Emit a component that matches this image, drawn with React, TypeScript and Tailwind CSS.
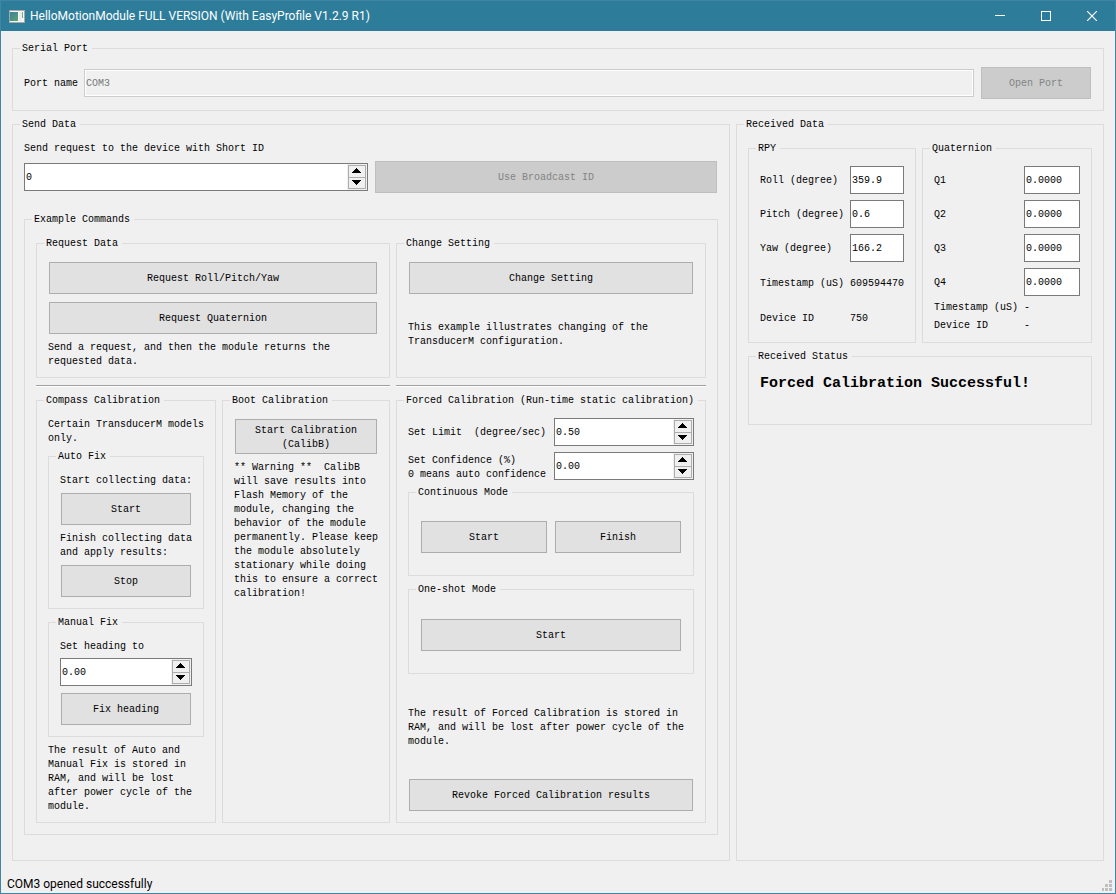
import type { ButtonHTMLAttributes, ReactNode } from "react";
import { useState } from "react";

function Group({ title, className = "", children }: { title: string; className?: string; children: ReactNode }) {
  return (
    <fieldset className={`flex min-w-0 flex-col border border-[#dcdcdc] px-[11px] pt-[11px] ${className}`}>
      <legend className="-ml-1 pr-1 pl-0.5 leading-[13px] whitespace-pre">{title}</legend>
      {children}
    </fieldset>
  );
}

function PushButton({ className = "", ...props }: ButtonHTMLAttributes<HTMLButtonElement>) {
  return (
    <button
      type="button"
      className={`m-px min-h-8 border border-[#adadad] bg-[#e1e1e1] pt-0.5 text-center leading-[14px] whitespace-pre hover:border-[#0078d7] hover:bg-[#e5f1fb] disabled:border-[#bfbfbf] disabled:bg-[#cccccc] disabled:text-[#838383] ${className}`}
      {...props}
    />
  );
}

function Arrow({ down = false }: { down?: boolean }) {
  return (
    <svg width="9" height="5" viewBox="0 0 9 5" shapeRendering="crispEdges" aria-hidden="true">
      <path
        d={down ? "M0 0h9v1H8v1H7v1H6v1H5v1H4V4H3V3H2V2H1V1H0z" : "M4 0h1v1h1v1h1v1h1v1h1v1H0V4h1V3h1V2h1V1h1z"}
        fill="#000"
      />
    </svg>
  );
}

function SpinBox({ id, initial, digits, step }: { id: string; initial: number; digits: number; step: number }) {
  const [text, setText] = useState(initial.toFixed(digits));
  const change = (delta: number) => setText(((parseFloat(text) || 0) + delta).toFixed(digits));
  return (
    <div className="flex h-7 min-w-0 border border-[#7a7a7a] bg-white">
      <input
        id={id}
        inputMode="decimal"
        value={text}
        onChange={(e) => setText(e.target.value)}
        className="min-w-0 flex-1 bg-transparent pt-0.5 pl-px outline-none"
      />
      <div className="w-5 bg-[#f0f0f0] p-px">
        <div className="grid h-full grid-rows-[12px_10px] divide-y divide-[#adadad] border border-[#adadad]">
          <button type="button" aria-label="Increase" className="flex items-center justify-center pr-px pb-0.5" onClick={() => change(step)}>
            <Arrow />
          </button>
          <button type="button" aria-label="Decrease" className="flex items-center justify-center pr-px pb-px" onClick={() => change(-step)}>
            <Arrow down />
          </button>
        </div>
      </div>
    </div>
  );
}

function Reading({ id, label, value }: { id: string; label: string; value: string }) {
  return (
    <>
      <label htmlFor={id} className="pt-0.5 whitespace-pre">{label}</label>
      <input id={id} readOnly value={value} className="h-7 w-full min-w-0 border border-[#7a7a7a] bg-white pl-px outline-none" />
    </>
  );
}

function Divider({ className = "" }: { className?: string }) {
  return <div className={`h-0.5 border-t border-b border-t-[#a0a0a0] border-b-white ${className}`} />;
}

function TitleBar() {
  return (
    <header className="flex h-[30px] items-center bg-[#2d7d9a] text-white">
      <svg className="ml-2 shrink-0" width="16" height="13" viewBox="0 0 16 13" aria-hidden="true">
        <defs>
          <linearGradient id="pane" x1="0" y1="0" x2="1" y2="1">
            <stop offset="0" stopColor="#3d7f9c" />
            <stop offset="1" stopColor="#5aa56e" />
          </linearGradient>
        </defs>
        <rect width="16" height="13" fill="#a8a8a8" />
        <rect x="1" y="1" width="14" height="11" fill="#f7f7f7" />
        <rect x="1" y="2" width="8" height="9" fill="url(#pane)" />
        <rect x="10" y="2" width="3" height="9" fill="#ececec" />
        <rect x="13" y="2" width="1" height="6" fill="#6fae86" />
      </svg>
      <h1 className="ml-[5px] flex-1 font-['Roboto','Noto_Sans',sans-serif] text-xs whitespace-nowrap">
        HelloMotionModule FULL VERSION (With EasyProfile V1.2.9 R1)
      </h1>
      <button type="button" aria-label="Minimize" className="flex h-full w-[46px] items-center justify-center">
        <svg width="10" height="10" viewBox="0 0 10 10" shapeRendering="crispEdges"><path d="M0 4.500h10" stroke="#fff" /></svg>
      </button>
      <button type="button" aria-label="Maximize" className="flex h-full w-[46px] items-center justify-center">
        <svg width="10" height="10" viewBox="0 0 10 10" shapeRendering="crispEdges"><path d="M.5.5h9v9h-9z" fill="none" stroke="#fff" /></svg>
      </button>
      <button type="button" aria-label="Close" className="flex h-full w-[46px] items-center justify-center">
        <svg width="10" height="10" viewBox="0 0 10 10"><path d="M0 0l10 10M10 0L0 10" stroke="#fff" strokeWidth="1.200" /></svg>
      </button>
    </header>
  );
}

function SerialPort() {
  return (
    <Group title="Serial Port" className="pb-2.5">
      <div className="flex items-center gap-1.5">
        <label htmlFor="port" className="pt-0.5 whitespace-pre">Port name</label>
        <input
          id="port"
          disabled
          defaultValue="COM3"
          className="h-7 min-w-0 flex-1 border border-[#cccccc] bg-[#f0f0f0] pl-px text-[#787878] inset-ring inset-ring-white"
        />
        <PushButton disabled className="w-[110px]">Open Port</PushButton>
      </div>
    </Group>
  );
}

function CompassCalibration() {
  return (
    <Group title="Compass Calibration" className="pb-2">
      <p className="whitespace-pre">{"Certain TransducerM models\nonly."}</p>
      <Group title="Auto Fix" className="mt-1 pb-2.5">
        <p className="mb-1 whitespace-pre">Start collecting data:</p>
        <PushButton>Start</PushButton>
        <p className="mt-1.5 mb-1 whitespace-pre">{"Finish collecting data\nand apply results:"}</p>
        <PushButton>Stop</PushButton>
      </Group>
      <Group title="Manual Fix" className="mt-[7px] pb-2.5">
        <label htmlFor="heading" className="mb-1">Set heading to</label>
        <SpinBox id="heading" initial={0} digits={2} step={1} />
        <PushButton className="mt-[7px]">Fix heading</PushButton>
      </Group>
      <p className="mt-[7px] whitespace-pre">
        {"The result of Auto and\nManual Fix is stored in\nRAM, and will be lost\nafter power cycle of the\nmodule."}
      </p>
    </Group>
  );
}

function BootCalibration() {
  return (
    <Group title="Boot Calibration" className="pb-2.5">
      <PushButton className="min-h-[35px]">{"Start Calibration\n(CalibB)"}</PushButton>
      <p className="mt-1.5 whitespace-pre">
        {"** Warning **  CalibB\nwill save results into\nFlash Memory of the\nmodule, changing the\nbehavior of the module\npermanently. Please keep\nthe module absolutely\nstationary while doing\nthis to ensure a correct\ncalibration!"}
      </p>
    </Group>
  );
}

function ForcedCalibration() {
  return (
    <Group title="Forced Calibration (Run-time static calibration)" className="pb-2.5">
      <div className="grid grid-cols-2 items-center gap-1.5">
        <label htmlFor="limit" className="pt-0.5 whitespace-pre">{"Set Limit  (degree/sec)"}</label>
        <SpinBox id="limit" initial={0.5} digits={2} step={0.1} />
        <label htmlFor="confidence" className="-mb-0.5 pt-0.5 whitespace-pre">{"Set Confidence (%)\n0 means auto confidence"}</label>
        <SpinBox id="confidence" initial={0} digits={2} step={1} />
      </div>
      <Group title="Continuous Mode" className="mt-1.5 pb-[21px]">
        <div className="mt-2.5 grid grid-cols-2 gap-1.5">
          <PushButton>Start</PushButton>
          <PushButton>Finish</PushButton>
        </div>
      </Group>
      <Group title="One-shot Mode" className="mt-[7px] pb-[21px]">
        <PushButton className="mt-3">Start</PushButton>
      </Group>
      <div className="flex flex-1 items-center pt-1">
        <p className="whitespace-pre">
          {"The result of Forced Calibration is stored in\nRAM, and will be lost after power cycle of the\nmodule."}
        </p>
      </div>
      <PushButton>Revoke Forced Calibration results</PushButton>
    </Group>
  );
}

function SendData() {
  return (
    <Group title="Send Data" className="pb-[25px]">
      <label htmlFor="short-id">Send request to the device with Short ID</label>
      <div className="mt-1 grid grid-cols-2 items-center gap-1.5">
        <SpinBox id="short-id" initial={0} digits={0} step={1} />
        <PushButton disabled>Use Broadcast ID</PushButton>
      </div>
      <Group title="Example Commands" className="mt-[19px] flex-1 pb-[11px]">
        <div className="grid flex-1 grid-cols-[180fr_168fr_310fr] grid-rows-[auto_auto_1fr] gap-x-1.5 gap-y-[7px]">
          <Group title="Request Data" className="col-span-2 pb-2">
            <PushButton>Request Roll/Pitch/Yaw</PushButton>
            <PushButton className="mt-[7px]">Request Quaternion</PushButton>
            <p className="mt-1.5 whitespace-pre">
              {"Send a request, and then the module returns the\nrequested data."}
            </p>
          </Group>
          <Group title="Change Setting" className="pb-[11px]">
            <PushButton>Change Setting</PushButton>
            <div className="flex flex-1 items-center pt-2">
              <p className="whitespace-pre">{"This example illustrates changing of the\nTransducerM configuration."}</p>
            </div>
          </Group>
          <Divider className="col-span-2" />
          <Divider />
          <CompassCalibration />
          <BootCalibration />
          <ForcedCalibration />
        </div>
      </Group>
    </Group>
  );
}

function ReceivedData() {
  return (
    <Group title="Received Data">
      <div className="grid grid-cols-[168fr_170fr] gap-1.5">
        <Group title="RPY" className="pb-2.5">
          <div className="grid flex-1 grid-cols-[84px_1fr] grid-rows-[28px_28px_28px_1fr_1fr] items-center gap-1.5">
            <Reading id="roll" label="Roll (degree)" value="359.9" />
            <Reading id="pitch" label="Pitch (degree)" value="0.6" />
            <Reading id="yaw" label="Yaw (degree)" value="166.2" />
            <span className="pt-0.5 whitespace-pre">Timestamp (uS)</span>
            <span className="pt-0.5">609594470</span>
            <span className="pt-0.5">Device ID</span>
            <span className="pt-0.5">750</span>
          </div>
        </Group>
        <Group title="Quaternion" className="pb-2.5">
          <div className="grid grid-cols-[84px_1fr] items-center gap-1.5 leading-3">
            <Reading id="q1" label="Q1" value="0.0000" />
            <Reading id="q2" label="Q2" value="0.0000" />
            <Reading id="q3" label="Q3" value="0.0000" />
            <Reading id="q4" label="Q4" value="0.0000" />
            <span className="whitespace-pre">Timestamp (uS)</span>
            <span>-</span>
            <span>Device ID</span>
            <span>-</span>
          </div>
        </Group>
      </div>
      <Group title="Received Status" className="mt-[7px] pb-[30px]">
        <output className="text-[15px] leading-5 font-bold">Forced Calibration Successful!</output>
      </Group>
    </Group>
  );
}

export default function App() {
  return (
    <div className="flex min-h-screen flex-col border border-[#4085a3] bg-[#f0f0f0] font-['Liberation_Mono',monospace] text-[10px] leading-[14px] text-black">
      <TitleBar />
      <main className="flex flex-1 flex-col gap-[7px] px-[11px] pt-[11px]">
        <SerialPort />
        <div className="grid flex-1 grid-cols-[718fr_368fr] gap-1.5">
          <SendData />
          <ReceivedData />
        </div>
      </main>
      <footer className="flex h-8 items-end justify-between pr-[3px] pl-1.5 font-['Roboto','Noto_Sans',sans-serif] text-xs">
        <span className="leading-[18px]">COM3 opened successfully</span>
        <svg className="mb-0.5" width="10" height="11" viewBox="0 0 10 11" fill="#bfbfbf" shapeRendering="crispEdges" aria-hidden="true">
          <path d="M7 0h3v3H7zM3 4h3v3H3zM7 4h3v3H7zM0 8h2v3H0zM3 8h3v3H3zM7 8h3v3H7z" />
        </svg>
      </footer>
    </div>
  );
}
